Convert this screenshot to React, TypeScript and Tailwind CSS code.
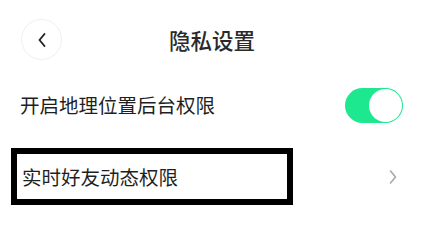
export default function App() {
  return (
    <div
      className="w-[424px] h-[221px] bg-white text-[#222] overflow-hidden"
      style={{ fontFamily: '"Noto Sans CJK SC", "Noto Sans", sans-serif' }}
    >
      {/* Header */}
      <header className="relative flex h-[80px] items-center justify-center">
        <button className="absolute left-[21px] top-[19px] flex h-[41px] w-[41px] items-center justify-center rounded-full border border-[#efefef] bg-white">
          <svg width="10" height="16" viewBox="0 0 10 16" fill="none">
            <path d="M7.5 2 L2.5 8 L7.5 14" stroke="#222" strokeWidth="1.9" strokeLinecap="round" strokeLinejoin="round" />
          </svg>
        </button>
        <h1 className="text-[21.5px] font-medium leading-none text-[#2a2a2a]">隐私设置</h1>
      </header>

      {/* Location toggle row */}
      <div className="flex h-[50px] items-center justify-between pl-[20px] pr-[21px]">
        <span className="text-[19.5px] leading-none text-[#1f1f1f]">开启地理位置后台权限</span>
        <div className="flex h-[35px] w-[58px] items-center justify-end rounded-full bg-[#1ee88f] p-[1px]">
          <div className="h-[33px] w-[33px] rounded-full bg-white" />
        </div>
      </div>

      {/* Friends activity row */}
      <div className="mt-[18px] flex items-center justify-between pl-[11px] pr-[26px]">
        <div className="flex h-[57px] w-[282px] items-center border-[6px] border-black pl-[5px]">
          <span className="text-[19.5px] leading-none text-[#1f1f1f]">实时好友动态权限</span>
        </div>
        <svg width="10" height="16" viewBox="0 0 10 16" fill="none">
          <path d="M2.5 2 L7.5 8 L2.5 14" stroke="#a8a8a8" strokeWidth="1.6" strokeLinecap="round" strokeLinejoin="round" />
        </svg>
      </div>
    </div>
  );
}
